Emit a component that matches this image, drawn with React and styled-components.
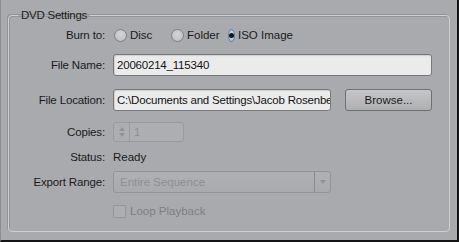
import React from "react";
import styled, { createGlobalStyle } from "styled-components";

const GlobalStyle = createGlobalStyle`
	html, body {
		margin: 0;
		padding: 0;
		background: #a9aaad;
	}
	body {
		font-family: "Liberation Sans", Arial, sans-serif;
		font-size: 11px;
		color: #232325;
	}
`;

const Frame = styled.div`
	box-sizing: border-box;
	width: 459px;
	height: 242px;
	background: #a9aaad;
	border-left: 1px solid #8c8d90;
	border-right: 2px solid #141414;
	border-bottom: 2px solid #141414;
	padding: 0 7px 0 7px;
	overflow: hidden;
`;

const Group = styled.fieldset`
	box-sizing: border-box;
	margin: 0;
	margin-top: 8px;
	width: 442px;
	height: 224px;
	padding: 0;
	border: 1px solid #cfd0d2;
	border-radius: 4px;
	box-shadow: inset 1px 1px 0 #939497, -1px -1px 0 #939497;

	legend {
		margin-left: 9px;
		padding: 0 3px;
		font-size: 11.5px;
		letter-spacing: -0.25px;
		line-height: 14px;
		color: #1e1e20;
	}
`;

const Row = styled.div`
	display: flex;
	align-items: center;
	height: ${(p) => p.$h}px;
	margin-top: ${(p) => p.$top}px;
`;

const Label = styled.span`
	width: 96px;
	margin-right: 8px;
	text-align: right;
	font-size: 11.5px;
	letter-spacing: -0.15px;
	color: #1a1a1c;
	white-space: nowrap;
`;

const Value = styled.span`
	color: #1a1a1c;
	font-size: 11.5px;
`;

const RadioItem = styled.label`
	display: flex;
	align-items: center;
	width: 57px;
	margin-left: ${(p) => (p.$first ? 1 : 0)}px;
	color: #1a1a1c;
	font-size: 11.5px;
	white-space: nowrap;
`;

const RadioDot = styled.span`
	box-sizing: border-box;
	width: 13px;
	height: 13px;
	border-radius: 50%;
	margin-right: 3px;
	border: 1px solid ${(p) => (p.$on ? "#3f8fcf" : "#7f8083")};
	background: radial-gradient(circle at 50% 40%, #d6d6d8 0%, #b9babc 100%);
	display: flex;
	align-items: center;
	justify-content: center;

	&::after {
		content: "";
		width: 5px;
		height: 5px;
		border-radius: 50%;
		background: #151515;
		display: ${(p) => (p.$on ? "block" : "none")};
	}
`;

const TextBox = styled.div`
	box-sizing: border-box;
	width: ${(p) => p.$w}px;
	height: 22px;
	border: 1px solid #77787b;
	border-radius: 3px;
	background: #ebebec;
	box-shadow: inset 1px 1px 1px rgba(0, 0, 0, 0.12);
	display: flex;
	align-items: center;
	padding-left: 3px;
	color: #131313;
	font-size: 11.5px;
	letter-spacing: -0.2px;
	white-space: nowrap;
	overflow: hidden;
`;

const Button = styled.button`
	box-sizing: border-box;
	width: 87px;
	height: 22px;
	margin-left: 14px;
	border: 1px solid #6f7073;
	border-radius: 3px;
	background: linear-gradient(#c6c6c8, #aeafb1);
	font-family: inherit;
	font-size: 11.5px;
	color: #1e1e20;
	padding: 0;
`;

const Spinner = styled.div`
	box-sizing: border-box;
	width: 71px;
	height: 20px;
	border: 1px solid #9a9b9e;
	border-radius: 3px;
	background: #adaeb1;
	display: flex;
	align-items: stretch;
	color: #8d8e91;
`;

const SpinArrows = styled.div`
	width: 15px;
	border-right: 1px solid #9a9b9e;
	display: flex;
	flex-direction: column;
	align-items: center;
	justify-content: center;
	gap: 2px;
`;

const Arrow = styled.span`
	width: 0;
	height: 0;
	border-left: 3px solid transparent;
	border-right: 3px solid transparent;
	${(p) =>
		p.$up
			? "border-bottom: 4px solid #919295;"
			: "border-top: 4px solid #919295;"}
`;

const SpinValue = styled.span`
	display: flex;
	align-items: center;
	padding-left: 4px;
	font-size: 11.5px;
`;

const Select = styled.div`
	box-sizing: border-box;
	width: 218px;
	height: 22px;
	border: 1px solid #939497;
	border-radius: 3px;
	background: linear-gradient(#b0b1b4, #a9aaad);
	display: flex;
	align-items: stretch;
	color: #8e8f92;
	font-size: 11.5px;
`;

const SelectText = styled.span`
	flex: 1;
	display: flex;
	align-items: center;
	padding-left: 6px;
`;

const SelectArrow = styled.span`
	width: 15px;
	border-left: 1px solid #8a8b8e;
	display: flex;
	align-items: center;
	justify-content: center;
`;

const CheckItem = styled.label`
	display: flex;
	align-items: center;
	margin-left: 104px;
	color: #7e7f82;
	font-size: 11.5px;
`;

const CheckBox = styled.span`
	box-sizing: border-box;
	width: 13px;
	height: 13px;
	margin-right: 4px;
	border: 1px solid #959699;
	border-radius: 1px;
	background: #adaeb1;
`;

const App = () => {
	return (
		<Frame>
			<GlobalStyle />
			<Group>
				<legend>DVD Settings</legend>
				<Row $h={16} $top={5}>
					<Label>Burn to:</Label>
					<RadioItem $first>
						<RadioDot />
						Disc
					</RadioItem>
					<RadioItem>
						<RadioDot />
						Folder
					</RadioItem>
					<RadioItem>
						<RadioDot $on />
						ISO Image
					</RadioItem>
				</Row>
				<Row $h={22} $top={11}>
					<Label>File Name:</Label>
					<TextBox $w={319}>20060214_115340</TextBox>
				</Row>
				<Row $h={22} $top={13}>
					<Label>File Location:</Label>
					<TextBox $w={218}>C:\Documents and Settings\Jacob Rosenbe</TextBox>
					<Button>Browse...</Button>
				</Row>
				<Row $h={20} $top={11}>
					<Label>Copies:</Label>
					<Spinner>
						<SpinArrows>
							<Arrow $up />
							<Arrow />
						</SpinArrows>
						<SpinValue>1</SpinValue>
					</Spinner>
				</Row>
				<Row $h={16} $top={7}>
					<Label>Status:</Label>
					<Value>Ready</Value>
				</Row>
				<Row $h={22} $top={6}>
					<Label>Export Range:</Label>
					<Select>
						<SelectText>Entire Sequence</SelectText>
						<SelectArrow>
							<Arrow />
						</SelectArrow>
					</Select>
				</Row>
				<Row $h={16} $top={10}>
					<CheckItem>
						<CheckBox />
						Loop Playback
					</CheckItem>
				</Row>
			</Group>
		</Frame>
	);
};

export default App;
